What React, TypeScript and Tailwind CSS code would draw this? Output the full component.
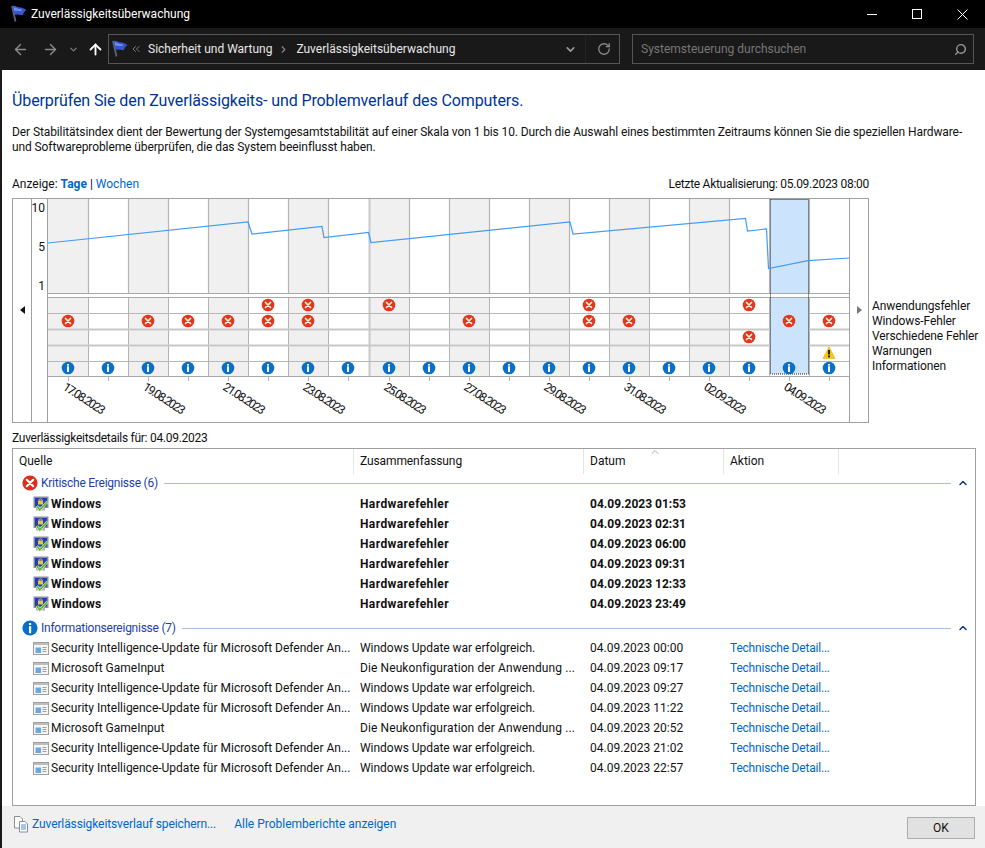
import { ArrowLeft, ArrowRight, ArrowUp, ChevronDown, ChevronRight, ChevronUp, ChevronsLeft, RotateCw, Search } from "lucide-react";

function Flag() {
  return (
    <svg width="17" height="18" viewBox="0 0 17 18">
      <path d="M2 1 L5.5 16.5" stroke="#5a6478" strokeWidth="1.8" />
      <path d="M2.5 1 C5.5 0 8 3 11 2.5 C13 3 15 4 16.5 5 C14.5 6 13.5 8 13 10 C10 10.5 7 8.5 4.5 10 Z" fill="#3a55cc" />
      <path d="M3.5 2.5 C6 2 8 4.5 11 4 L12 6 C9 6.5 7 5 4.5 6 Z" fill="#6f8cf0" />
    </svg>
  );
}

function ErrorBadge() {
  return (
    <svg width="16" height="16" viewBox="0 0 16 16">
      <circle cx="8" cy="8" r="7.6" fill="#d92f1c" />
      <path d="M4.8 4.8 L11.2 11.2 M11.2 4.8 L4.8 11.2" stroke="#fff" strokeWidth="2.2" strokeLinecap="round" />
    </svg>
  );
}

function InfoBadge() {
  return (
    <svg width="16" height="16" viewBox="0 0 16 16">
      <circle cx="8" cy="8" r="7.6" fill="#0b6fc6" />
      <rect x="7" y="3" width="2.2" height="2" fill="#fff" />
      <rect x="7" y="6.2" width="2.2" height="7" fill="#fff" />
    </svg>
  );
}

function MonitorIcon() {
  return (
    <svg width="16" height="16" viewBox="0 0 16 16">
      <rect x="0.5" y="0.5" width="15" height="11.5" fill="#8f8f8f" />
      <rect x="2" y="2" width="12" height="8.5" fill="#1d3fb8" />
      <path d="M6 4.5 V3.8 C6 2.6 9 2.6 9 3.8 V4.5" fill="none" stroke="#e6c93a" />
      <rect x="5" y="4.5" width="5" height="4" fill="#e6c93a" />
      <rect x="3" y="12" width="9" height="2.5" fill="#b0b0b0" />
      <path d="M4 10 L6.8 14 L14.5 5.5" fill="none" stroke="#fff" strokeWidth="2.6" />
      <path d="M4 10 L6.8 14 L14.5 5.5" fill="none" stroke="#55b52e" strokeWidth="1.7" />
    </svg>
  );
}

function WindowIcon() {
  return (
    <svg width="16" height="13" viewBox="0 0 16 13">
      <rect x="0.5" y="0.5" width="15" height="12" fill="#f6f6f6" stroke="#a0a0a0" />
      <rect x="1" y="1" width="14" height="2" fill="#bdbdbd" />
      <rect x="2.5" y="5.5" width="5.5" height="5.5" fill="#6aa6e0" />
      <path d="M9.5 5.5 H13.5 M9.5 7.5 H13.5 M9.5 9.5 H13.5" stroke="#a0a0a0" />
    </svg>
  );
}

function SaveIcon() {
  return (
    <svg width="16" height="18" viewBox="0 0 16 18">
      <path d="M1.5 1.5 H7 L9.5 4 V13 H1.5 Z" fill="#fff" stroke="#8c8c8c" />
      <path d="M6.5 6.5 H12 L14.5 9 V17 H6.5 Z" fill="#fff" stroke="#7d8ea8" />
      <path d="M8 10 H13 M8 12 H13 M8 14 H13" stroke="#4a8fdc" />
    </svg>
  );
}

const centers = [68, 108, 148, 188, 228, 268, 308, 348, 389, 429, 469, 509, 549, 589, 629, 669, 709, 749, 789, 829];
const rowY = [305, 321, 337, 353, 368];
const errors: [number, number][] = [
  [0, 5], [0, 6], [0, 8], [0, 13], [0, 17],
  [1, 0], [1, 2], [1, 3], [1, 4], [1, 5], [1, 6], [1, 10], [1, 13], [1, 14], [1, 18], [1, 19],
  [2, 17],
];
const dates = ["17.08.2023", "19.08.2023", "21.08.2023", "23.08.2023", "25.08.2023", "27.08.2023", "29.08.2023", "31.08.2023", "02.09.2023", "04.09.2023"];
const columnLines = [88, 128, 168, 208, 248, 288, 328, 369, 409, 449, 489, 529, 569, 609, 649, 689, 729, 769, 809];
const greyColumns = [[48, 40], [128, 40], [208, 40], [288, 40], [369, 40], [449, 40], [529, 40], [609, 40], [689, 40]];
const linePoints = "48,243 248,222 252,234 322,226.5 324,237.5 368.5,232.5 371,242.5 570,222 573,234 745.5,218.5 747.5,231 766.5,229 768.5,268.5 808,260.7 849,258";

function ChartPlot() {
  return (
    <svg width="801" height="222" viewBox="48 199 801 222" className="block shrink-0">
      {greyColumns.map(([x, w]) => (
        <g key={x}>
          <rect x={x} y={199} width={w} height={94} fill="#f0f0f0" />
          <rect x={x} y={298} width={w} height={78} fill="#f0f0f0" />
        </g>
      ))}
      {columnLines.map((x) => (
        <g key={x}>
          <line x1={x + 0.5} x2={x + 0.5} y1={199} y2={293} stroke={x === 369 ? "#c8c8c8" : "#b4b4b4"} strokeWidth={x === 369 ? 2 : 1.2} />
          <line x1={x + 0.5} x2={x + 0.5} y1={297} y2={376} stroke={x === 369 ? "#c8c8c8" : "#b4b4b4"} strokeWidth={x === 369 ? 2 : 1} />
        </g>
      ))}
      <line x1={48} x2={849} y1={293.5} y2={293.5} stroke="#a8a8a8" />
      <line x1={48} x2={849} y1={297.5} y2={297.5} stroke="#a8a8a8" />
      <line x1={48} x2={849} y1={313.5} y2={313.5} stroke="#b8b8b8" />
      <line x1={48} x2={849} y1={329.5} y2={329.5} stroke="#c8c8c8" strokeWidth={2} />
      <line x1={48} x2={849} y1={345.5} y2={345.5} stroke="#c8c8c8" strokeWidth={2} />
      <line x1={48} x2={849} y1={361.5} y2={361.5} stroke="#b8b8b8" />
      <line x1={48} x2={849} y1={376.5} y2={376.5} stroke="#a8a8a8" />
      <rect x={770} y={199} width={39} height={94} fill="#cbe4fb" />
      <rect x={770} y={298} width={39} height={76} fill="#cbe4fb" />
      <rect x={770.5} y={199.5} width={38} height={174.5} fill="none" stroke="#222" strokeDasharray="1 1" />
      <polyline points={linePoints} fill="none" stroke="#429cf5" strokeWidth={1.2} />
      {centers.map((c) => (
        <line key={c} x1={c + 0.5} x2={c + 0.5} y1={377} y2={381} stroke="#b4b4b4" />
      ))}
      {errors.map(([row, col]) => (
        <g key={`${row}-${col}`} transform={`translate(${centers[col]},${rowY[row]})`}>
          <circle r={6.3} fill="#e0381c" />
          <path d="M-2.5 -2.5 L2.5 2.5 M2.5 -2.5 L-2.5 2.5" stroke="#ffeee8" strokeWidth={1.7} strokeLinecap="round" />
        </g>
      ))}
      {centers.map((c) => (
        <g key={c} transform={`translate(${c},${rowY[4]})`}>
          <circle r={6.3} fill="#0b6fc6" />
          <rect x={-1} y={-4} width={2} height={8} fill="#fff" />
          <rect x={-1} y={-2.4} width={2} height={0.7} fill="#0b6fc6" />
        </g>
      ))}
      <path d="M829 346.5 L835 358.5 H823 Z" fill="#f7c614" stroke="#e0a800" strokeWidth={0.5} />
      <rect x={828} y={350} width={2} height={4.5} fill="#222" />
      <rect x={828} y={355.5} width={2} height={1.8} fill="#222" />
      {dates.map((d, i) => {
        const x = centers[i * 2] - 6;
        return (
          <text key={d} x={x} y={389} transform={`rotate(33 ${x} 389)`} fontSize={12} letterSpacing={-1.4} fill="#111" fontFamily="Roboto, sans-serif">
            {d}
          </text>
        );
      })}
    </svg>
  );
}

function ReliabilityChart() {
  return (
    <div className="flex mt-[6px]">
      <div className="flex h-[225px] w-[857px] shrink-0 border border-[#a0a0a0]">
        <div className="flex w-[19px] items-center justify-center border-r border-[#a0a0a0]">
          <svg width="5" height="8" viewBox="0 0 5 8" className="mt-[-2px]"><path d="M5 0 V8 L0 4 Z" fill="#111" /></svg>
        </div>
        <div className="flex w-[16px] flex-col items-end gap-[23px] border-r border-[#a0a0a0] pr-[2px] pt-[1px] text-right">
          <span className="h-4 leading-4">10</span>
          <span className="h-4 leading-4">5</span>
          <span className="h-4 leading-4">1</span>
        </div>
        <ChartPlot />
        <div className="flex w-[19px] items-center justify-center border-l border-[#a0a0a0]">
          <svg width="5" height="8" viewBox="0 0 5 8" className="mt-[-2px]"><path d="M0 0 V8 L5 4 Z" fill="#777" /></svg>
        </div>
      </div>
      <div className="ml-[3px] flex flex-col pt-[101px] leading-[15px] tracking-[-0.1px] whitespace-nowrap">
        <span>Anwendungsfehler</span>
        <span>Windows-Fehler</span>
        <span>Verschiedene Fehler</span>
        <span>Warnungen</span>
        <span>Informationen</span>
      </div>
    </div>
  );
}

const critical = ["01:53", "02:31", "06:00", "09:31", "12:33", "23:49"];
const SEC = "Security Intelligence-Update für Microsoft Defender An...";
const GAME = "Microsoft GameInput";
const OK_MSG = "Windows Update war erfolgreich.";
const RECONF = "Die Neukonfiguration der Anwendung ...";
const infos = [
  [SEC, OK_MSG, "00:00"],
  [GAME, RECONF, "09:17"],
  [SEC, OK_MSG, "09:27"],
  [SEC, OK_MSG, "11:22"],
  [GAME, RECONF, "20:52"],
  [SEC, OK_MSG, "21:02"],
  [SEC, OK_MSG, "22:57"],
];

function GroupHeader({ icon, label, className }: { icon: React.ReactNode; label: string; className?: string }) {
  return (
    <div className={`flex h-[18px] items-center pl-[9px] ${className ?? ""}`}>
      {icon}
      <span className="ml-[3px] tracking-[-0.25px] text-[#1c3fa8]">{label}</span>
      <div className="ml-[6px] h-px flex-1 bg-[#a9bfdf]" />
      <div className="flex w-[24px] justify-center">
        <ChevronUp size={12} strokeWidth={3} className="text-[#0f3a8a]" />
      </div>
    </div>
  );
}

function DetailsTable() {
  return (
    <div className="mt-[2px] h-[358px] w-[964px] shrink-0 border border-[#a0a0a0]">
      <div className="relative grid h-[25px] grid-cols-[341px_230px_140px_115px] items-center">
        <div className="h-full border-r border-[#e5e5e5] pl-[6px] leading-[25px]">Quelle</div>
        <div className="h-full border-r border-[#e5e5e5] pl-[6px] leading-[25px] tracking-[-0.1px]">Zusammenfassung</div>
        <div className="h-full border-r border-[#e5e5e5] pl-[6px] leading-[25px]">Datum</div>
        <div className="h-full border-r border-[#e5e5e5] pl-[6px] leading-[25px]">Aktion</div>
        <ChevronUp size={12} strokeWidth={1.2} className="absolute left-[636px] top-[-3px] text-[#777]" />
      </div>
      <GroupHeader icon={<ErrorBadge />} label="Kritische Ereignisse (6)" />
      <div className="mt-[2px]">
        {critical.map((t) => (
          <div key={t} className="grid h-5 grid-cols-[347px_230px_140px_1fr] items-center font-bold">
            <div className="flex items-center gap-[2px] pl-[20px]"><MonitorIcon /><span className="tracking-[0.2px]">Windows</span></div>
            <div className="tracking-[0.4px]">Hardwarefehler</div>
            <div>04.09.2023 {t}</div>
            <div />
          </div>
        ))}
      </div>
      <GroupHeader icon={<InfoBadge />} label="Informationsereignisse (7)" className="mt-[5px]" />
      <div className="mt-[1px]">
        {infos.map(([source, summary, time]) => (
          <div key={time} className="grid h-5 grid-cols-[347px_230px_140px_1fr] items-center whitespace-nowrap">
            <div className="flex items-center gap-[2px] pl-[20px]"><WindowIcon />{source}</div>
            <div className={summary === RECONF ? "tracking-[0.1px]" : "tracking-[-0.03px]"}>{summary}</div>
            <div>04.09.2023 {time}</div>
            <div className="tracking-[-0.2px] text-[#0066cc]">Technische Detail...</div>
          </div>
        ))}
      </div>
    </div>
  );
}

export default function App() {
  return (
    <div className="flex h-[848px] w-[985px] flex-col overflow-hidden bg-white font-['Roboto',sans-serif] text-xs text-[#111]">
      <div className="flex h-[28px] shrink-0 items-center bg-black pl-[10px] text-white">
        <Flag />
        <span className="ml-[4px]">Zuverlässigkeitsüberwachung</span>
        <div className="ml-auto flex items-center pr-[17px]">
          <div className="h-px w-[10px] bg-white" />
          <div className="ml-[35px] h-[10px] w-[10px] border border-white" />
          <svg width="11" height="11" viewBox="0 0 11 11" className="ml-[35px]"><path d="M0.5 0.5 L10.5 10.5 M10.5 0.5 L0.5 10.5" stroke="#fff" /></svg>
        </div>
      </div>

      <div className="flex h-[42px] shrink-0 items-center bg-[#191919] pl-[12px] text-[#e8e8e8]">
        <ArrowLeft size={17} strokeWidth={2} className="text-[#8a8a8a]" />
        <ArrowRight size={17} strokeWidth={2} className="ml-[13px] text-[#8a8a8a]" />
        <ChevronDown size={11} strokeWidth={3} className="ml-[9px] text-[#777]" />
        <ArrowUp size={17} strokeWidth={2.6} className="ml-[8px] text-white" />
        <div className="ml-[4px] flex h-[30px] w-[512px] items-center border border-[#555] pl-[2px]">
          <Flag />
          <ChevronsLeft size={12} strokeWidth={1.5} className="ml-[2px] text-[#999]" />
          <span className="ml-[6px]">Sicherheit und Wartung</span>
          <ChevronRight size={11} strokeWidth={2.5} className="ml-[6px] text-[#888]" />
          <span className="ml-[7px]">Zuverlässigkeitsüberwachung</span>
          <ChevronDown size={13} strokeWidth={3} className="ml-auto text-[#999]" />
          <div className="ml-[8px] h-full w-px bg-[#222]" />
          <RotateCw size={14} strokeWidth={2.2} className="ml-[11px] mr-[8px] text-[#8a8a8a]" />
        </div>
        <div className="ml-[12px] flex h-[30px] w-[342px] items-center justify-between border border-[#555] pl-[8px] pr-[6px] text-[#777]">
          <span>Systemsteuerung durchsuchen</span>
          <Search size={13} strokeWidth={2.6} className="-scale-x-100 text-[#999]" />
        </div>
      </div>

      <div className="flex min-h-0 flex-1 flex-col border-l-2 border-[#1a1a1a]">
        <div className="flex flex-1 flex-col pl-[10px] pt-[20px]">
          <h1 className="text-base leading-[22px] tracking-[-0.11px] text-[#003399]">Überprüfen Sie den Zuverlässigkeits- und Problemverlauf des Computers.</h1>
          <p className="mt-[13px] leading-[15px] tracking-[-0.1px] whitespace-nowrap">
            Der Stabilitätsindex dient der Bewertung der Systemgesamtstabilität auf einer Skala von 1 bis 10. Durch die Auswahl eines bestimmten Zeitraums können Sie die speziellen Hardware-
            <br />
            und Softwareprobleme überprüfen, die das System beeinflusst haben.
          </p>
          <div className="mt-[21px] flex h-4 w-[857px] items-center justify-between">
            <div>
              Anzeige: <span className="font-bold text-[#0066cc]">Tage</span> | <span className="text-[#0066cc]">Wochen</span>
            </div>
            <div className="tracking-[-0.28px]">Letzte Aktualisierung: 05.09.2023 08:00</div>
          </div>
          <ReliabilityChart />
          <div className="mt-[7px] h-4 leading-4 tracking-[-0.28px]">Zuverlässigkeitsdetails für: 04.09.2023</div>
          <DetailsTable />
        </div>
        <div className="flex h-[42px] shrink-0 items-start bg-[#f0f0f0] pl-[11px] pt-[9px]">
          <SaveIcon />
          <span className="ml-[3px] mt-[1px] tracking-[-0.1px] text-[#0066cc]">Zuverlässigkeitsverlauf speichern...</span>
          <span className="ml-[18px] mt-[1px] text-[#0066cc]">Alle Problemberichte anzeigen</span>
          <div className="ml-auto mr-[10px] mt-[2px] flex h-[22px] w-[68px] items-center justify-center border border-[#adadad] bg-[#e1e1e1]">OK</div>
        </div>
      </div>
    </div>
  );
}
